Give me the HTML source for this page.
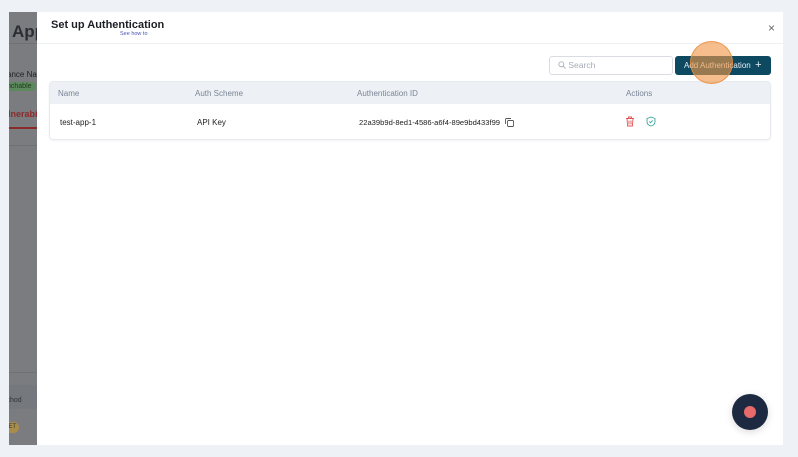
<!DOCTYPE html>
<html><head><meta charset="utf-8"><style>
*{margin:0;padding:0;box-sizing:border-box}
body{width:798px;height:457px;background:#eef2f7;font-family:"Liberation Sans",sans-serif;position:relative;overflow:hidden}
.abs{position:absolute}
.left{left:9px;top:12px;width:28px;height:433px;background:#7a7c80;overflow:hidden}
.modal{left:37px;top:12px;width:746px;height:433px;background:#fff}
.t{font-size:8px;color:#222;position:absolute;white-space:nowrap}
.h{font-size:8px;color:#7a8494;position:absolute;white-space:nowrap}
</style></head><body>
<div class="abs left">
  <div class="abs" style="left:3px;top:10px;font-size:17px;font-weight:bold;color:#2a2d33">App</div>
  <div class="abs" style="left:0;top:31px;width:28px;height:1px;background:#6f7175"></div>
  <div class="abs" style="left:-2px;top:58px;font-size:8px;color:#222">ance Na</div>
  <div class="abs" style="left:-6px;top:70px;font-size:7px;color:#1e3a1e;background:#5c8a5c;border-radius:6px;padding:1px 4px">nchable</div>
  <div class="abs" style="left:-1px;top:97px;font-size:9px;font-weight:bold;color:#8b2a2a">lnerabi</div>
  <div class="abs" style="left:0;top:115px;width:28px;height:2px;background:#8b2a2a"></div>
  <div class="abs" style="left:0;top:133px;width:28px;height:1px;background:#6f7175"></div>
  <div class="abs" style="left:0;top:360px;width:28px;height:1px;background:#6f7175"></div>
  <div class="abs" style="left:0;top:373px;width:28px;height:24px;background:#75787d"></div>
  <div class="abs" style="left:-1px;top:385px;font-size:7px;color:#333">thod</div>
  <div class="abs" style="left:-6px;top:410px;width:16px;height:11px;border-radius:6px;background:#a88c4a;font-size:6px;color:#333;text-align:right;padding-right:3px;line-height:11px">ET</div>
</div>
<div class="abs modal">
  <div class="abs" style="left:14px;top:7px;font-size:11px;font-weight:bold;color:#1c1f24">Set up Authentication</div>
  <div class="abs" style="left:83px;top:19px;font-size:5.5px;color:#4a55b5">See how to</div>
  <div class="abs" style="left:731px;top:9px;font-size:12px;color:#666">×</div>
  <div class="abs" style="left:0;top:31px;width:746px;height:1px;background:#eef0f3"></div>
  <div class="abs" style="left:512px;top:44px;width:124px;height:19px;border:1px solid #d9dde3;border-radius:3px;font-size:8.5px;color:#a6adb8;padding:3px 0 0 8px">
    <svg width="8" height="8" viewBox="0 0 8 8" style="vertical-align:-1px"><circle cx="3.3" cy="3.3" r="2.5" fill="none" stroke="#a6adb8" stroke-width=".9"/><path d="M5.2 5.2L7.5 7.5" stroke="#a6adb8" stroke-width=".9"/></svg> Search</div>
  <div class="abs" style="left:638px;top:44px;width:96px;height:19px;background:#0d4a61;border-radius:3px;color:#e8eef2;font-size:8px;line-height:19px;padding-left:9px">Add Authentication &nbsp;<span style="font-size:11px">+</span></div>
  <div class="abs" style="left:12px;top:69px;width:722px;height:59px;border:1px solid #e6e9ee;border-radius:4px;overflow:hidden;box-shadow:0 1px 2px rgba(0,0,0,.05)">
    <div class="abs" style="left:0;top:0;width:722px;height:22px;background:#edf1f6"></div>
    <div class="h" style="left:8px;top:7px">Name</div>
    <div class="h" style="left:145px;top:7px">Auth Scheme</div>
    <div class="h" style="left:307px;top:7px">Authentication ID</div>
    <div class="h" style="left:576px;top:7px">Actions</div>
    <div class="t" style="left:10px;top:36px">test-app-1</div>
    <div class="t" style="left:147px;top:36px">API Key</div>
    <div class="t" style="left:309px;top:36px;font-size:7.6px">22a39b9d-8ed1-4586-a6f4-89e9bd433f99</div>
    <svg class="abs" style="left:454px;top:35px" width="11" height="11" viewBox="0 0 11 11"><rect x="3.5" y="3.5" width="6" height="6" rx="1" fill="none" stroke="#555" stroke-width=".9"/><path d="M1.5 7V2.5a1 1 0 0 1 1-1H7" fill="none" stroke="#555" stroke-width=".9"/></svg>
    <svg class="abs" style="left:575px;top:34px" width="10" height="11" viewBox="0 0 10 11"><path d="M1 2.5h8M3.5 2.5V1h3v1.5M2 2.5l.6 7.5h4.8l.6-7.5M4 4.5v4M6 4.5v4" fill="none" stroke="#e05555" stroke-width=".9"/></svg>
    <svg class="abs" style="left:596px;top:34px" width="10" height="11" viewBox="0 0 10 11"><path d="M5 1L9 2.5v3C9 8 7 9.5 5 10 3 9.5 1 8 1 5.5v-3z" fill="none" stroke="#3aa59a" stroke-width=".9"/><path d="M3.3 5.5l1.2 1.2 2.2-2.3" fill="none" stroke="#3aa59a" stroke-width=".9"/></svg>
  </div>
  <div class="abs" style="left:653px;top:29px;width:43px;height:43px;border-radius:50%;background:rgba(240,150,70,.62);border:1px solid rgba(235,140,60,.8);z-index:5"></div>
  <div class="abs" style="left:695px;top:382px;width:36px;height:36px;border-radius:50%;background:#1d2940;box-shadow:0 2px 8px rgba(0,0,0,.15)"><div class="abs" style="left:12px;top:12px;width:12px;height:12px;border-radius:50%;background:#e86a6a"></div></div>
</div>
</body></html>
